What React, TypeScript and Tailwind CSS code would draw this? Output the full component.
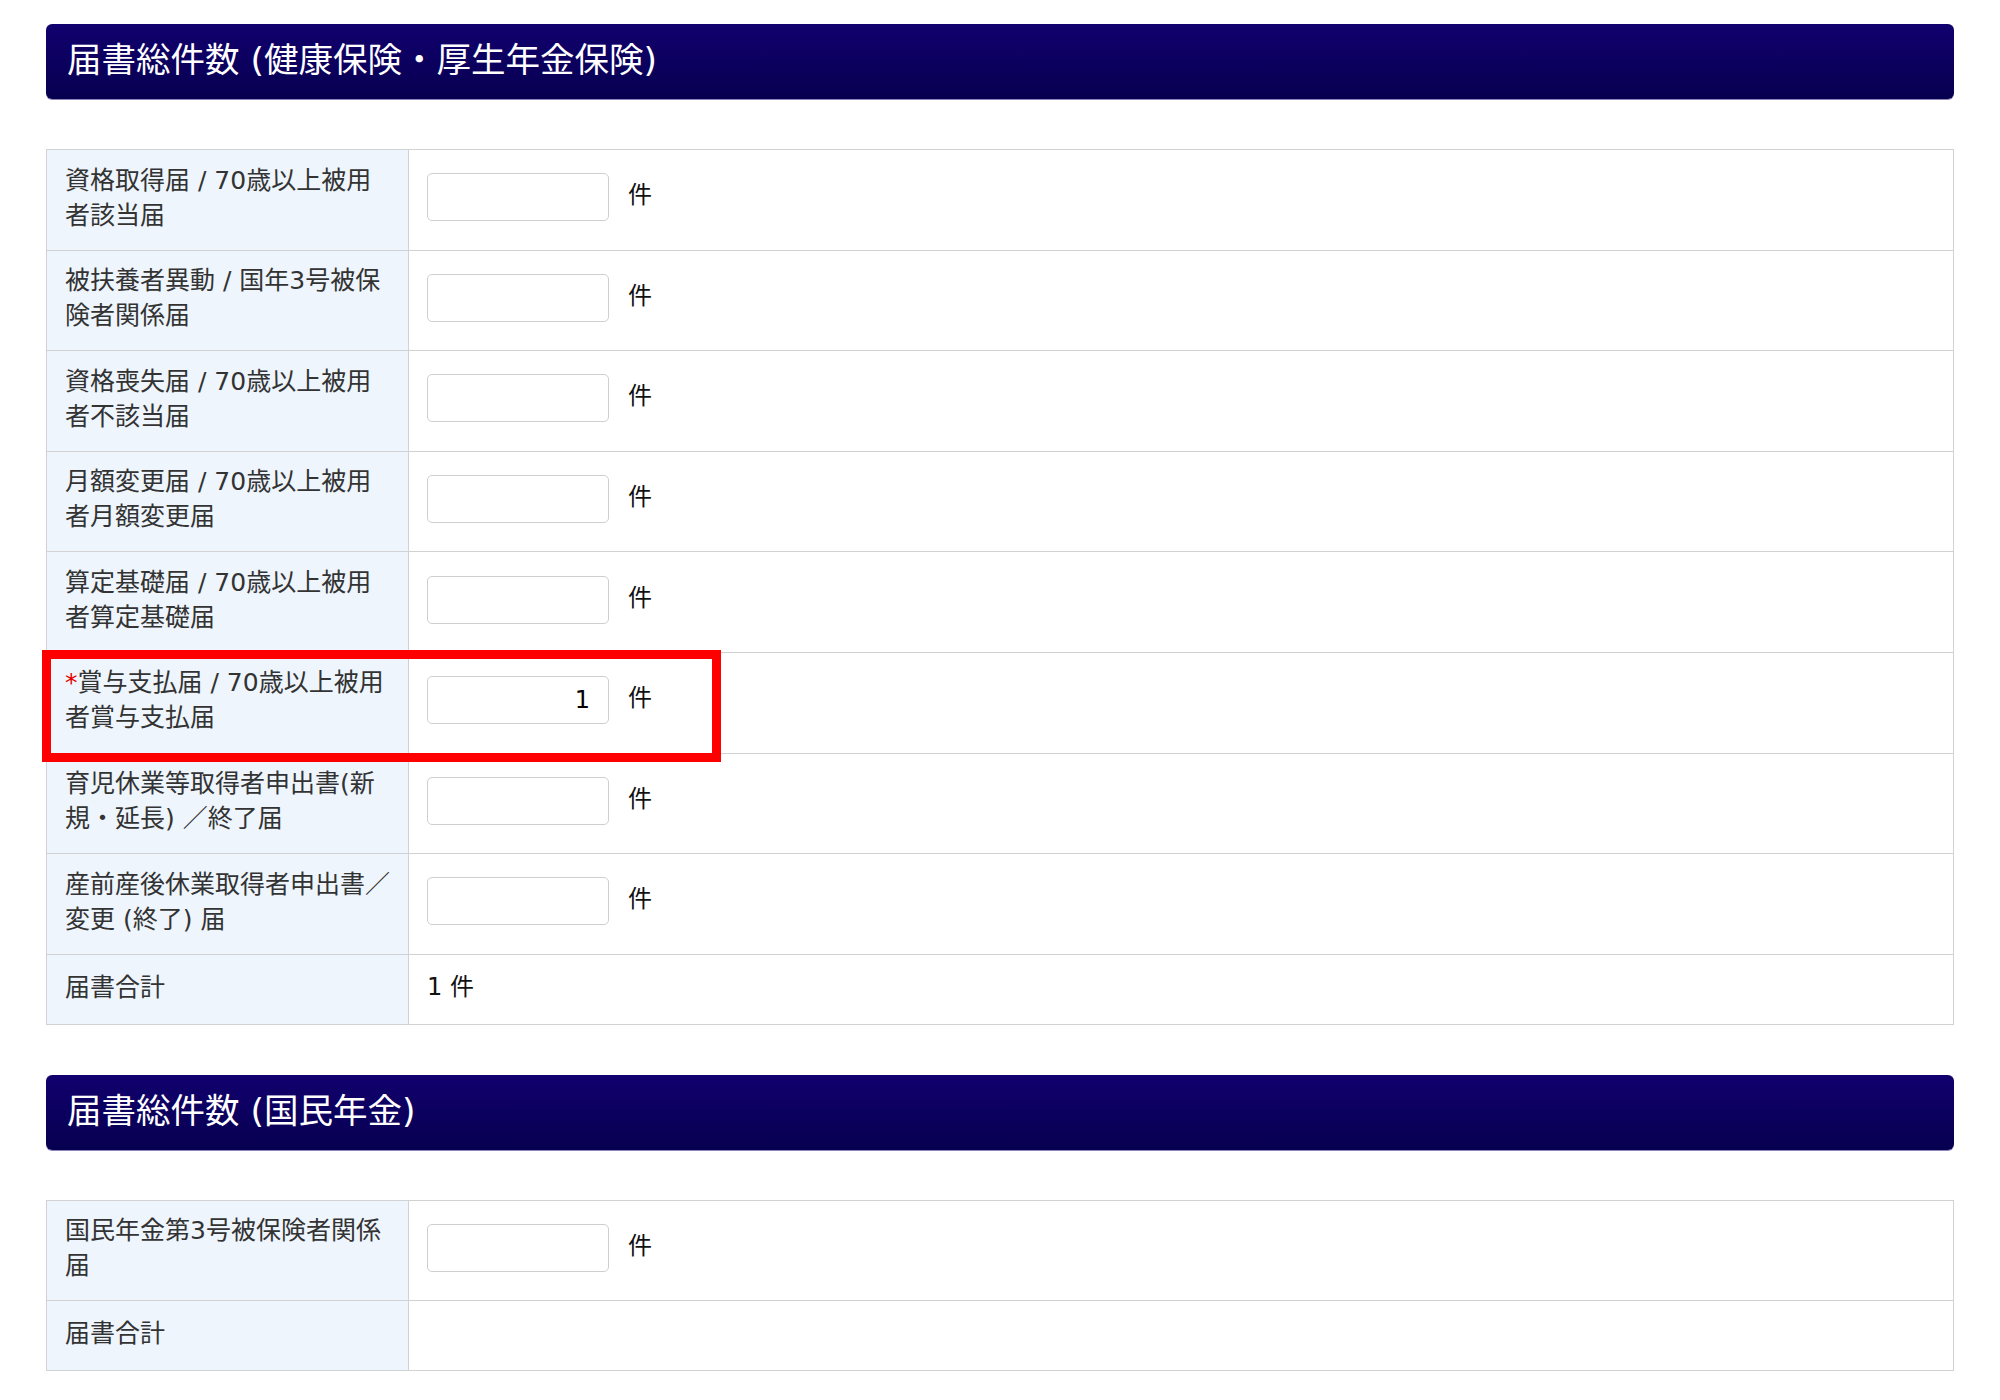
import React from 'react';

type Row = { lines: string[]; value?: string; required?: boolean };

const kenpoRows: Row[] = [
  { lines: ['資格取得届 / 70歳以上被用', '者該当届'] },
  { lines: ['被扶養者異動 / 国年3号被保', '険者関係届'] },
  { lines: ['資格喪失届 / 70歳以上被用', '者不該当届'] },
  { lines: ['月額変更届 / 70歳以上被用', '者月額変更届'] },
  { lines: ['算定基礎届 / 70歳以上被用', '者算定基礎届'] },
  { lines: ['賞与支払届 / 70歳以上被用', '者賞与支払届'], value: '1', required: true },
  { lines: ['育児休業等取得者申出書(新', '規・延長) ／終了届'] },
  { lines: ['産前産後休業取得者申出書／', '変更 (終了) 届'] },
];

const kokuminRows: Row[] = [{ lines: ['国民年金第3号被保険者関係', '届'] }];

function SectionHeader({ title }: { title: string }) {
  return (
    <div className="h-[75px] flex items-center px-[21px] rounded-[6px] bg-linear-to-b from-[#11006e] to-[#070050] shadow-[0_1px_0_#8e86bb]">
      <h2 className="text-white text-[34.5px] font-normal leading-none -mt-[2px]">{title}</h2>
    </div>
  );
}

function InputRow({ row }: { row: Row }) {
  return (
    <div className="relative flex border-t border-[#d2d2d2] first:border-t-0">
      <div className="w-[362px] shrink-0 bg-[#eef5fd] border-r border-[#d2d2d2] px-[18px] pt-[12.5px] pb-[17.1px] text-[25px] leading-[35px] text-[#333]">
        {row.lines.map((line, i) => (
          <div key={i} className="whitespace-nowrap">
            {i === 0 && row.required && <span className="text-[#e60000]">*</span>}
            {line}
          </div>
        ))}
      </div>
      <div className="flex-1 flex items-center px-[18px] pb-[5px]">
        <input
          readOnly
          value={row.value ?? ''}
          className="w-[182px] h-[48px] border border-[#cfcfcf] rounded-[5px] bg-white text-right pr-[18px] text-[24px] text-black outline-none"
        />
        <span className="ml-[19px] text-[24px] text-[#111] -mt-[4px]">件</span>
      </div>
      {row.required && (
        <div className="absolute -left-[5px] -top-[3px] w-[679px] h-[112px] border-[9px] border-[#ff0000] pointer-events-none z-10" />
      )}
    </div>
  );
}

function TotalRow({ value }: { value?: string }) {
  return (
    <div className="flex border-t border-[#d2d2d2]">
      <div className="w-[362px] shrink-0 bg-[#eef5fd] border-r border-[#d2d2d2] px-[18px] pt-[15px] pb-[19px] text-[25px] leading-[35px] text-[#333]">
        届書合計
      </div>
      <div className="flex-1 flex items-center px-[18px] text-[24px] text-[#111] -mt-[5px]">{value}</div>
    </div>
  );
}

export default function App() {
  return (
    <div
      className="min-h-screen bg-white pt-[24px] px-[46px]"
      style={{ fontFamily: '"DejaVu Sans", "Noto Sans CJK JP", sans-serif' }}
    >
      <SectionHeader title="届書総件数 (健康保険・厚生年金保険)" />
      <div className="mt-[50px] border border-[#d2d2d2]">
        {kenpoRows.map((row, i) => (
          <InputRow key={i} row={row} />
        ))}
        <TotalRow value="1 件" />
      </div>

      <div className="mt-[50px]">
        <SectionHeader title="届書総件数 (国民年金)" />
      </div>
      <div className="mt-[50px] border border-[#d2d2d2]">
        {kokuminRows.map((row, i) => (
          <InputRow key={i} row={row} />
        ))}
        <TotalRow />
      </div>
    </div>
  );
}
